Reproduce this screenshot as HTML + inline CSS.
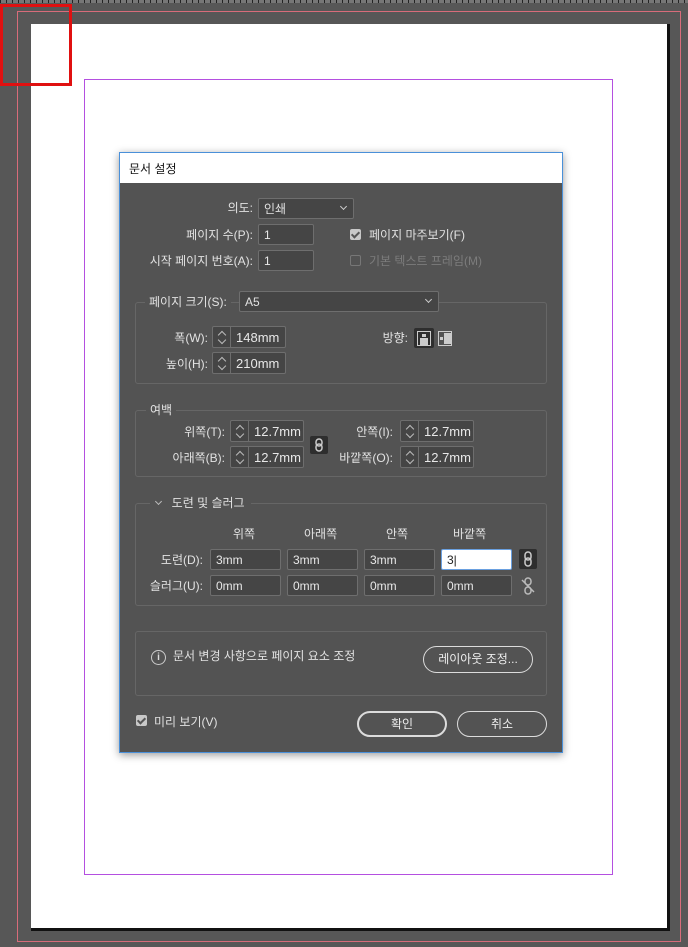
<!DOCTYPE html>
<html><head><meta charset="utf-8"><style>
*{margin:0;padding:0;box-sizing:border-box}
body{width:688px;height:947px;background:#575757;position:relative;overflow:hidden;font-family:"Liberation Sans","Noto Sans CJK KR","NanumGothic",sans-serif;font-size:12px;color:#e2e2e2}
.a{position:absolute}
.lbl{position:absolute;white-space:nowrap;line-height:14px}
.r{text-align:right}
.in{position:absolute;background:#454545;border:1px solid #6e6e6e;border-radius:2px;padding-left:5px;line-height:20px;color:#e8e8e8}
.sp{position:absolute;background:#454545;border:1px solid #6e6e6e;border-radius:2px;line-height:21px;color:#e8e8e8}
.sp i{position:absolute;left:0;top:0;bottom:0;width:18px;border-right:1px solid #6e6e6e}
.sp i:before,.sp i:after{content:"";position:absolute;left:6px;width:5px;height:5px;border-left:1px solid #bbb;border-top:1px solid #bbb}
.sp i:before{top:5px;transform:rotate(45deg)}
.sp i:after{top:10px;transform:rotate(-135deg)}
.sp span{position:absolute;left:23px;font-size:13px}
.grp{position:absolute;border:1px solid #666;border-radius:3px}
.leg{position:absolute;background:#535353;padding:0 4px;line-height:14px}
.sel{position:absolute;background:#454545;border:1px solid #6e6e6e;border-radius:2px;padding-left:5px;line-height:20px}
.sel:after{content:"";position:absolute;right:7px;top:5px;width:4px;height:4px;border-right:1px solid #ccc;border-bottom:1px solid #ccc;transform:rotate(45deg)}
.cb{position:absolute;width:11px;height:11px;background:#c8c8c8;border-radius:2px}
.cb:after{content:"";position:absolute;left:3px;top:1px;width:3px;height:6px;border-right:2px solid #555;border-bottom:2px solid #555;transform:rotate(45deg)}
.btn{position:absolute;border:2px solid #dcdcdc;border-radius:14px;text-align:center;line-height:22px;color:#eee}
</style></head><body>
<div class="a" style="left:0;top:0;width:688px;height:3px;background:repeating-linear-gradient(90deg,#222 0 1px,#777 1px 6px)"></div>
<div class="a" style="left:17px;top:11px;width:664px;height:931px;border:1px solid #d86c7a"></div>
<div class="a" style="left:31px;top:24px;width:639px;height:907px;background:#111"></div>
<div class="a" style="left:31px;top:24px;width:636px;height:904px;background:#fff"></div>
<div class="a" style="left:84px;top:79px;width:529px;height:796px;border:1px solid #b44fe0"></div>
<div class="a" style="left:0;top:4px;width:72px;height:82px;border:3px solid #e01010"></div>

<div class="a" style="left:119px;top:152px;width:444px;height:601px;background:#535353;border:1px solid #4a90d9;box-shadow:0 2px 8px rgba(0,0,0,.4)">
 <div class="a" style="left:0;top:0;width:442px;height:30px;background:#fff;color:#111;padding:7px 0 0 9px;font-size:12px">문서 설정</div>
</div>

<div class="lbl r" style="right:435px;top:201px">의도:</div>
<div class="sel" style="left:258px;top:198px;width:96px;height:21px">인쇄</div>
<div class="lbl r" style="right:435px;top:228px">페이지 수(P):</div>
<div class="in" style="left:258px;top:224px;width:56px;height:21px">1</div>
<div class="lbl r" style="right:435px;top:254px">시작 페이지 번호(A):</div>
<div class="in" style="left:258px;top:250px;width:56px;height:21px">1</div>
<div class="cb" style="left:350px;top:229px"></div>
<div class="lbl" style="left:369px;top:228px">페이지 마주보기(F)</div>
<div class="a" style="left:350px;top:255px;width:11px;height:11px;border:1px solid #777;border-radius:2px"></div>
<div class="lbl" style="left:369px;top:254px;color:#7c7c7c">기본 텍스트 프레임(M)</div>

<div class="grp" style="left:135px;top:302px;width:412px;height:82px"></div>
<div class="leg" style="left:145px;top:295px">페이지 크기(S):</div>
<div class="sel" style="left:239px;top:291px;width:200px;height:21px">A5</div>
<div class="lbl r" style="right:480px;top:331px">폭(W):</div>
<div class="sp" style="left:212px;top:326px;width:74px;height:22px"><i></i><span>148mm</span></div>
<div class="lbl r" style="right:480px;top:357px">높이(H):</div>
<div class="sp" style="left:212px;top:352px;width:74px;height:22px"><i></i><span>210mm</span></div>
<div class="lbl r" style="right:280px;top:331px">방향:</div>
<div class="a" style="left:414px;top:328px;width:20px;height:20px;background:#2e2e2e;border-radius:2px"></div>
<div class="a" style="left:417px;top:331px;width:14px;height:15px;border:1px solid #ccc"><div class="a" style="left:4px;top:2px;width:4px;height:3px;background:#ccc"></div><div class="a" style="left:2px;top:6px;width:8px;height:7px;background:#ccc"></div></div>
<div class="a" style="left:438px;top:331px;width:14px;height:15px;border:1px solid #ccc"><div class="a" style="left:1px;top:5px;width:3px;height:3px;background:#ccc"></div><div class="a" style="left:5px;top:1px;width:7px;height:11px;background:#ccc"></div></div>

<div class="grp" style="left:135px;top:410px;width:412px;height:67px"></div>
<div class="leg" style="left:146px;top:403px">여백</div>
<div class="lbl r" style="right:463px;top:425px">위쪽(T):</div>
<div class="sp" style="left:230px;top:420px;width:74px;height:22px"><i></i><span>12.7mm</span></div>
<div class="lbl r" style="right:463px;top:451px">아래쪽(B):</div>
<div class="sp" style="left:230px;top:446px;width:74px;height:22px"><i></i><span>12.7mm</span></div>
<svg class="a" style="left:310px;top:436px" width="18" height="18"><rect width="18" height="18" rx="2" fill="#2e2e2e"/><rect x="6" y="3" width="6" height="7" rx="3" fill="none" stroke="#ccc" stroke-width="1.5"/><rect x="6" y="8" width="6" height="7" rx="3" fill="none" stroke="#ccc" stroke-width="1.5"/></svg>
<div class="lbl r" style="right:295px;top:425px">안쪽(I):</div>
<div class="sp" style="left:400px;top:420px;width:74px;height:22px"><i></i><span>12.7mm</span></div>
<div class="lbl r" style="right:295px;top:451px">바깥쪽(O):</div>
<div class="sp" style="left:400px;top:446px;width:74px;height:22px"><i></i><span>12.7mm</span></div>

<div class="grp" style="left:135px;top:503px;width:412px;height:103px"></div>
<div class="leg" style="left:150px;top:496px;padding-right:6px"><span style="display:inline-block;width:5px;height:5px;border-right:1px solid #bbb;border-bottom:1px solid #bbb;transform:rotate(45deg);margin:0 4px 3px 2px"></span>&nbsp;&nbsp;도련 및 슬러그</div>
<div class="lbl" style="left:233px;top:527px">위쪽</div>
<div class="lbl" style="left:304px;top:527px">아래쪽</div>
<div class="lbl" style="left:386px;top:527px">안쪽</div>
<div class="lbl" style="left:453px;top:527px">바깥쪽</div>
<div class="lbl r" style="right:485px;top:553px">도련(D):</div>
<div class="in" style="left:210px;top:549px;width:71px;height:21px">3mm</div>
<div class="in" style="left:287px;top:549px;width:71px;height:21px">3mm</div>
<div class="in" style="left:364px;top:549px;width:71px;height:21px">3mm</div>
<div class="in" style="left:441px;top:549px;width:71px;height:21px;background:#fff;border-color:#6aa0e0;color:#222">3|</div>
<svg class="a" style="left:519px;top:549px" width="18" height="20"><rect width="18" height="20" rx="2" fill="#2e2e2e"/><rect x="6" y="3" width="6" height="8" rx="3" fill="none" stroke="#ccc" stroke-width="1.5"/><rect x="6" y="9" width="6" height="8" rx="3" fill="none" stroke="#ccc" stroke-width="1.5"/></svg>
<div class="lbl r" style="right:485px;top:579px">슬러그(U):</div>
<div class="in" style="left:210px;top:575px;width:71px;height:21px">0mm</div>
<div class="in" style="left:287px;top:575px;width:71px;height:21px">0mm</div>
<div class="in" style="left:364px;top:575px;width:71px;height:21px">0mm</div>
<div class="in" style="left:441px;top:575px;width:71px;height:21px">0mm</div>
<svg class="a" style="left:519px;top:576px" width="18" height="20"><rect x="6" y="2" width="6" height="7" rx="3" fill="none" stroke="#bbb" stroke-width="1.5"/><rect x="6" y="11" width="6" height="7" rx="3" fill="none" stroke="#bbb" stroke-width="1.5"/><line x1="3" y1="4" x2="15" y2="16" stroke="#bbb" stroke-width="1.5"/></svg>

<div class="grp" style="left:135px;top:631px;width:412px;height:65px"></div>
<div class="a" style="left:151px;top:650px;width:15px;height:15px;border:1px solid #ccc;border-radius:50%;text-align:center;font-size:10px;line-height:13px;color:#ddd;font-weight:bold">i</div>
<div class="lbl" style="left:173px;top:649px">문서 변경 사항으로 페이지 요소 조정</div>
<div class="btn" style="left:423px;top:646px;width:110px;height:27px;border-width:1px;line-height:25px">레이아웃 조정...</div>

<div class="cb" style="left:136px;top:715px"></div>
<div class="lbl" style="left:154px;top:715px">미리 보기(V)</div>
<div class="btn" style="left:357px;top:711px;width:90px;height:26px">확인</div>
<div class="btn" style="left:457px;top:711px;width:90px;height:26px;border-width:1px;line-height:24px">취소</div>
</body></html>
